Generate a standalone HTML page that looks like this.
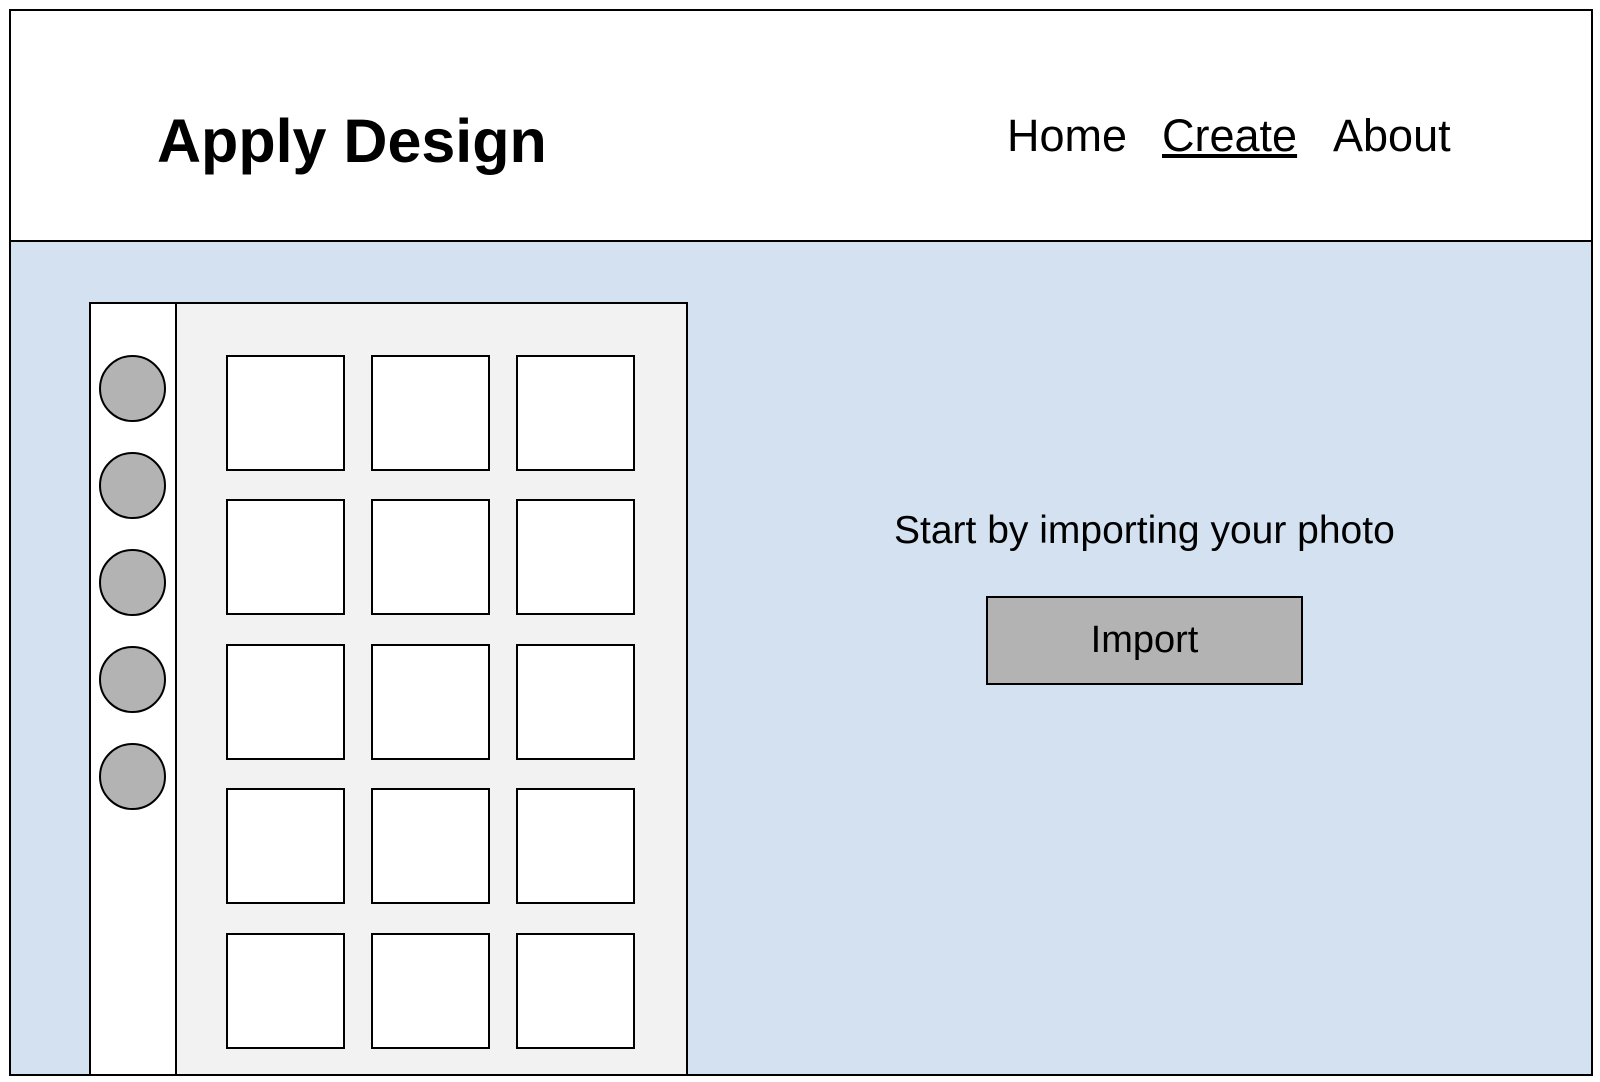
<!DOCTYPE html>
<html><head><style>
html,body{margin:0;padding:0;width:1600px;height:1082px;background:#fff;overflow:hidden;font-family:"Liberation Sans",Arial,sans-serif;}
.a{position:absolute;box-sizing:border-box;}
.sq{position:absolute;box-sizing:border-box;width:119px;height:116px;background:#fff;border:2px solid #000;}
.c{position:absolute;box-sizing:border-box;width:67px;height:67px;border-radius:50%;background:#b3b3b3;border:2px solid #000;left:99px;}
.t{position:absolute;white-space:nowrap;color:#000;}
</style></head><body>
<div class="a" style="left:9px;top:9px;width:1584px;height:1067px;border:2px solid #000;background:#d4e1f0;"></div>
<div class="a" style="left:9px;top:9px;width:1584px;height:233px;border:2px solid #000;background:#fff;"></div>
<div class="t" style="left:157px;top:106px;font-size:61px;font-weight:bold;line-height:70px;">Apply Design</div>
<div class="t" style="left:1007px;top:110px;font-size:45px;line-height:52px;">Home</div>
<div class="t" style="left:1162px;top:110px;font-size:45px;line-height:52px;text-decoration:underline;">Create</div>
<div class="t" style="left:1333px;top:110px;font-size:45px;line-height:52px;">About</div>
<div class="a" style="left:89px;top:302px;width:599px;height:774px;border:2px solid #000;background:#f2f2f2;"></div>
<div class="a" style="left:89px;top:302px;width:88px;height:774px;border:2px solid #000;background:#fff;"></div>
<div class="c" style="top:355px"></div>
<div class="c" style="top:452px"></div>
<div class="c" style="top:549px"></div>
<div class="c" style="top:646px"></div>
<div class="c" style="top:743px"></div>

<div class="sq" style="left:226px;top:355px"></div><div class="sq" style="left:371px;top:355px"></div><div class="sq" style="left:516px;top:355px"></div>
<div class="sq" style="left:226px;top:499px"></div><div class="sq" style="left:371px;top:499px"></div><div class="sq" style="left:516px;top:499px"></div>
<div class="sq" style="left:226px;top:644px"></div><div class="sq" style="left:371px;top:644px"></div><div class="sq" style="left:516px;top:644px"></div>
<div class="sq" style="left:226px;top:788px"></div><div class="sq" style="left:371px;top:788px"></div><div class="sq" style="left:516px;top:788px"></div>
<div class="sq" style="left:226px;top:933px"></div><div class="sq" style="left:371px;top:933px"></div><div class="sq" style="left:516px;top:933px"></div>

<div class="t" style="left:894px;top:508px;font-size:39px;line-height:46px;">Start by importing your photo</div>
<div class="a" style="left:986px;top:596px;width:317px;height:89px;border:2px solid #000;background:#b3b3b3;"></div>
<div class="t" style="left:986px;top:618px;width:317px;text-align:center;font-size:38px;line-height:44px;">Import</div>
</body></html>
